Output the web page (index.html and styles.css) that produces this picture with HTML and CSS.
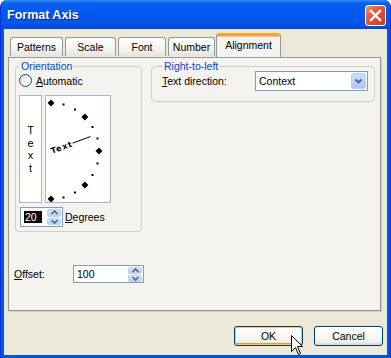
FILE: index.html
```html
<!DOCTYPE html>
<html lang="en">

<head>
  <meta charset="UTF-8" />
  <title>Format Axis</title>
  <link rel="stylesheet" href="styles.css">
</head>

<body>
  <div class="window">
    <div class="titlebar">
      <span class="title">Format Axis</span>
      <span class="close">
        <svg width="19" height="19" viewBox="0 0 19 19">
          <path d="M5 5 L14 14 M14 5 L5 14" stroke="#fff" stroke-width="2.4" stroke-linecap="square" />
        </svg>
      </span>
    </div>

    <div class="client">
      <div class="tabs">
        <div class="tab w-patterns">Patterns</div>
        <div class="tab w-scale">Scale</div>
        <div class="tab w-font">Font</div>
        <div class="tab w-number">Number</div>
        <div class="tab active">Alignment</div>
      </div>

      <div class="panel">
        <div class="top-row">
          <fieldset class="group orient">
            <legend>Orientation</legend>
            <div class="radio-row">
              <span class="radio"></span>
              <span><u>A</u>utomatic</span>
            </div>
            <div class="orient-row">
              <div class="vtext">
                <span>T</span><span>e</span><span>x</span><span>t</span>
              </div>
              <div class="dial">
                <svg width="64" height="106" viewBox="1 1 64 106">
                  <g fill="#000">
                    <path d="M6 4.5 L9.5 8 L6 11.5 L2.5 8 Z" />
                    <path d="M39.9 18.6 L43.4 22.1 L39.9 25.6 L36.4 22.1 Z" />
                    <path d="M54 52.5 L57.5 56 L54 59.5 L50.5 56 Z" />
                    <path d="M39.9 86.4 L43.4 89.9 L39.9 93.4 L36.4 89.9 Z" />
                    <path d="M6 100.5 L9.5 104 L6 107.5 L2.5 104 Z" />
                    <rect x="17.5" y="8.5" width="2" height="2" />
                    <rect x="29" y="13.5" width="2" height="2" />
                    <rect x="46.5" y="31" width="2" height="2" />
                    <rect x="51.5" y="42.5" width="2" height="2" />
                    <rect x="51.5" y="67.5" width="2" height="2" />
                    <rect x="46.5" y="79" width="2" height="2" />
                    <rect x="29" y="96.5" width="2" height="2" />
                    <rect x="17.5" y="101.5" width="2" height="2" />
                  </g>
                  <line x1="27.6" y1="48.1" x2="45.5" y2="41.6" stroke="#000" stroke-width="1" />
                  <text class="dial-text" x="6" y="59" transform="rotate(-20 6 56)">Text</text>
                </svg>
              </div>
            </div>
            <div class="deg-row">
              <div class="spin deg-spin">
                <span class="spin-val"><span class="sel">20</span></span>
                <span class="spin-btns">
                  <span class="spin-btn">
                    <svg width="9" height="5" viewBox="0 0 9 5"><path d="M1.5 4 L4.5 1 L7.5 4" fill="none" stroke="#4d6185" stroke-width="1.6" /></svg>
                  </span>
                  <span class="spin-btn">
                    <svg width="9" height="5" viewBox="0 0 9 5"><path d="M1.5 1 L4.5 4 L7.5 1" fill="none" stroke="#4d6185" stroke-width="1.6" /></svg>
                  </span>
                </span>
              </div>
              <span><u>D</u>egrees</span>
            </div>
          </fieldset>

          <fieldset class="group rtl">
            <legend>Right-to-left</legend>
            <div class="rtl-row">
              <span class="rtl-label"><u>T</u>ext direction:</span>
              <div class="combo">
                <span class="combo-val">Context</span>
                <span class="drop">
                  <svg width="9" height="6" viewBox="0 0 9 6"><path d="M1.5 1.5 L4.5 4.5 L7.5 1.5" fill="none" stroke="#4d6185" stroke-width="1.8" /></svg>
                </span>
              </div>
            </div>
          </fieldset>
        </div>

        <div class="offset-row">
          <span class="offset-label"><u>O</u>ffset:</span>
          <div class="spin offset-spin">
            <span class="spin-val">100</span>
            <span class="spin-btns">
              <span class="spin-btn">
                <svg width="9" height="5" viewBox="0 0 9 5"><path d="M1.5 4 L4.5 1 L7.5 4" fill="none" stroke="#4d6185" stroke-width="1.6" /></svg>
              </span>
              <span class="spin-btn">
                <svg width="9" height="5" viewBox="0 0 9 5"><path d="M1.5 1 L4.5 4 L7.5 1" fill="none" stroke="#4d6185" stroke-width="1.6" /></svg>
              </span>
            </span>
          </div>
        </div>
      </div>

      <div class="buttons">
        <button class="btn ok">OK</button>
        <button class="btn">Cancel</button>
      </div>
    </div>

    <svg class="cursor" width="13" height="21" viewBox="0 0 13 21">
      <path d="M0.5 0.5 L0.5 16.5 L4.5 12.5 L7.5 19.5 L9.5 18.5 L6.5 11.5 L11.5 11.5 Z" fill="#fff" stroke="#000" stroke-width="1" />
    </svg>
  </div>
</body>

</html>
```

FILE: styles.css
```css
body {
  margin: 0;
  padding: 0;
  font-family: 'Liberation Sans', Arial, sans-serif;
  font-size: 10.5px;
  color: #000;
}

.window {
  position: relative;
  width: 391px;
  height: 358px;
  box-sizing: border-box;
  background: #0055e5;
  border-left: 1px solid #0831d9;
  border-right: 1px solid #0831d9;
  border-radius: 7px 7px 0 0;
  display: flex;
  flex-direction: column;
  overflow: hidden;
}

.titlebar {
  height: 29px;
  flex: none;
  display: flex;
  align-items: flex-start;
  padding: 0 4px 0 6px;
  background: linear-gradient(#3b8cf8 0, #0a60ec 3px, #0058ee 45%, #0556e8 80%, #0049d6 100%);
}

.title {
  color: #fff;
  font-weight: bold;
  font-size: 12.5px;
  line-height: 31px;
  text-shadow: 1px 1px 0 #0a1e8c;
}

.close {
  margin-left: auto;
  margin-top: 5px;
  width: 19px;
  height: 19px;
  border: 1px solid #fff;
  border-radius: 3px;
  background: linear-gradient(135deg, #f08a6c 0, #e0573c 45%, #c63b1c 100%);
  display: flex;
}

.client {
  flex: 1;
  margin: 0 3px 3px 3px;
  background: #ece9d8;
  display: flex;
  flex-direction: column;
}

.tabs {
  display: flex;
  align-items: flex-end;
  height: 23px;
  padding-top: 5px;
  padding-left: 6px;
  position: relative;
  z-index: 1;
}

.tab {
  height: 19px;
  box-sizing: border-box;
  border: 1px solid #919b9c;
  border-bottom: none;
  border-radius: 3px 3px 0 0;
  background: linear-gradient(#fff, #f1f0ea 70%, #e6e4da);
  text-align: center;
  line-height: 19px;
  margin-right: 2px;
  margin-bottom: 1px;
}

.w-patterns { width: 53px; }
.w-scale { width: 51px; }
.w-font { width: 48px; }
.w-number { width: 47px; margin-right: 1px; }

.tab.active {
  width: 65px;
  height: 24px;
  margin-bottom: 0;
  border-top: 3px solid #f7a23c;
  background: #f5f3ef;
  line-height: 18px;
  box-shadow: inset 0 1px 0 #ffc873;
}

.panel {
  margin-left: 4px;
  width: 373px;
  height: 254px;
  box-sizing: border-box;
  border: 1px solid #919b9c;
  background: #f5f3ef;
  box-shadow: 1px 1px 0 #d0cec0;
}

.top-row {
  display: flex;
  align-items: flex-start;
  padding-top: 2px;
}

.group {
  margin: 0;
  border: 1px solid #d0d0bf;
  border-radius: 4px;
  min-width: 0;
}

.group legend {
  color: #0046d5;
  padding: 0 1px;
  margin-left: 1px;
  line-height: 12px;
}

.orient {
  margin-left: 6px;
  width: 127px;
  box-sizing: border-box;
  padding: 0 0 4px 3px;
}

.radio-row {
  display: flex;
  align-items: center;
  gap: 4px;
  height: 13px;
  margin-top: 2px;
}

.radio {
  width: 11px;
  height: 11px;
  border: 1px solid #1c5180;
  border-radius: 50%;
  background: radial-gradient(circle at 65% 65%, #fff 0, #f1f0ec 45%, #d5d3c8 100%);
}

.orient-row {
  display: flex;
  gap: 3px;
  margin-top: 8px;
}

.vtext {
  width: 23px;
  height: 108px;
  box-sizing: border-box;
  border: 1px solid #a7b6cc;
  background: #fff;
  display: flex;
  flex-direction: column;
  align-items: center;
  justify-content: center;
  line-height: 12.5px;
  font-size: 11px;
}

.dial {
  width: 66px;
  height: 108px;
  box-sizing: border-box;
  border: 1px solid #a7b6cc;
  background: #fff;
}

.dial svg {
  display: block;
}

.dial-text {
  font-family: 'DejaVu Sans', sans-serif;
  font-size: 8px;
  font-weight: bold;
  letter-spacing: 1px;
}

.deg-row {
  display: flex;
  align-items: center;
  gap: 2px;
  margin-top: 4px;
  margin-left: 1px;
  height: 20px;
}

.spin {
  display: flex;
  box-sizing: border-box;
  border: 1px solid #7f9db9;
  background: #fff;
}

.deg-spin {
  width: 43px;
  height: 20px;
}

.spin-val {
  flex: 1;
  display: flex;
  align-items: center;
  padding-left: 3px;
}

.sel {
  background: #0a0a0a;
  color: #fff;
  padding: 0 5px 0 1px;
  line-height: 12px;
}

.spin-btns {
  width: 14px;
  display: flex;
  flex-direction: column;
  gap: 1px;
  padding: 1px 1px 1px 0;
}

.spin-btn {
  flex: 1;
  border-radius: 2px;
  background: linear-gradient(#d8e4fd, #b8cdf8);
  border: 1px solid #bfd0f3;
  display: flex;
  align-items: center;
  justify-content: center;
}

.spin-btn svg {
  display: block;
}

.rtl {
  margin-left: 9px;
  width: 224px;
  box-sizing: border-box;
  padding: 0 0 10px 10px;
}

.rtl-row {
  display: flex;
  align-items: center;
  margin-top: -1px;
}

.rtl-label {
  width: 93px;
}

.combo {
  width: 113px;
  height: 20px;
  box-sizing: border-box;
  border: 1px solid #7f9db9;
  background: #fff;
  display: flex;
}

.combo-val {
  flex: 1;
  padding-left: 3px;
  line-height: 18px;
}

.drop {
  width: 15px;
  margin: 1px;
  border-radius: 2px;
  background: linear-gradient(#cedcfb, #aec6f6);
  border: 1px solid #bfd0f3;
  box-sizing: border-box;
  display: flex;
  align-items: center;
  justify-content: center;
}

.offset-row {
  display: flex;
  align-items: center;
  margin-top: 33px;
  padding-left: 5px;
}

.offset-label {
  width: 59px;
}

.offset-spin {
  width: 71px;
  height: 18px;
}

.buttons {
  display: flex;
  justify-content: flex-end;
  gap: 11px;
  margin-top: 15px;
  margin-right: 4px;
}

.btn {
  width: 69px;
  height: 20px;
  font-family: 'Liberation Sans', Arial, sans-serif;
  font-size: 10.5px;
  color: #000;
  border: 1px solid #003c74;
  border-radius: 3px;
  background: linear-gradient(#fff, #f3f2ec 80%, #d9d7cc);
  padding: 0;
}

.btn.ok {
  box-shadow: inset 0 0 0 1px #fcc55d, inset 0 -1px 0 1px #e5a01a;
}

.cursor {
  position: absolute;
  left: 290px;
  top: 335px;
}
```
